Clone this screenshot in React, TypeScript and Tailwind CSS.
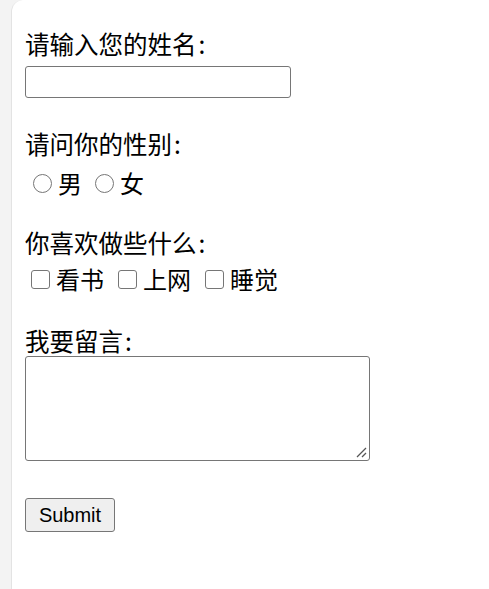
import { FC } from "react";

const cjk = { fontFamily: '"Noto Sans CJK SC", "Liberation Sans", sans-serif' };

const Radio: FC<{ text: string; ml: string }> = ({ text, ml }) => (
    <label className={"flex items-center " + ml}>
        <input type="radio" name="sex" className="appearance-none w-[19px] h-[19px] rounded-full border-[1.5px] border-[#767676] bg-white mr-[6px]" />
        <span>{text}</span>
    </label>
);

const Check: FC<{ text: string; ml: string }> = ({ text, ml }) => (
    <label className={"flex items-center " + ml}>
        <input type="checkbox" className="appearance-none w-[19px] h-[19px] rounded-[3px] border-[1.5px] border-[#767676] bg-white mr-[6px]" />
        <span>{text}</span>
    </label>
);

const App: FC = () => {
    return (
        <div className="flex w-full min-h-screen bg-[#f3f3f3]">
            <form className="flex-1 ml-[11px] min-h-[589px] bg-white rounded-tl-[12px] border-l border-[#e3e3e3] pt-[28px] pl-[13px] flex flex-col items-start text-[24px] text-black" style={cjk}>
                <div className="leading-[32px] h-[32px] text-[24.5px]">请输入您的姓名<span className="ml-[2px]">:</span></div>
                <input type="text" className="mt-[6px] w-[266px] h-[32px] border-[1.5px] border-[#767676] rounded-[3px] bg-white" />

                <div className="mt-[30px] leading-[32px] h-[32px] text-[24.5px]">请问你的性别<span className="ml-[2px]">:</span></div>
                <div className="mt-[7px] flex items-center h-[32px] leading-[32px]">
                    <Radio text="男" ml="ml-[8px]" />
                    <Radio text="女" ml="ml-[13px]" />
                </div>

                <div className="mt-[28px] leading-[32px] h-[32px] text-[24.5px]">你喜欢做些什么<span className="ml-[2px]">:</span></div>
                <div className="mt-[4px] flex items-center h-[32px] leading-[32px]">
                    <Check text="看书" ml="ml-[6px]" />
                    <Check text="上网" ml="ml-[14px]" />
                    <Check text="睡觉" ml="ml-[14px]" />
                </div>

                <div className="mt-[30px] leading-[32px] h-[32px] text-[24.5px]">我要留言<span className="ml-[2px]">:</span></div>
                <div className="relative mt-[-1px] w-[345px] h-[105px]">
                    <textarea className="w-full h-full resize-none border-[1.5px] border-[#767676] rounded-[3px] bg-white" />
                    <svg className="absolute right-[3px] bottom-[3px]" width="12" height="12" viewBox="0 0 12 12">
                        <line x1="2" y1="11" x2="11" y2="2" stroke="#555" strokeWidth="1.3" />
                        <line x1="7" y1="11" x2="11" y2="7" stroke="#555" strokeWidth="1.3" />
                    </svg>
                </div>

                <button type="button" className="mt-[37px] w-[90px] h-[34px] bg-[#efefef] border-[1.5px] border-[#767676] rounded-[3px] text-[20px] leading-none text-black" style={{ fontFamily: '"Liberation Sans", Arial, sans-serif' }}>
                    Submit
                </button>
            </form>
        </div>
    );
};

export default App;
